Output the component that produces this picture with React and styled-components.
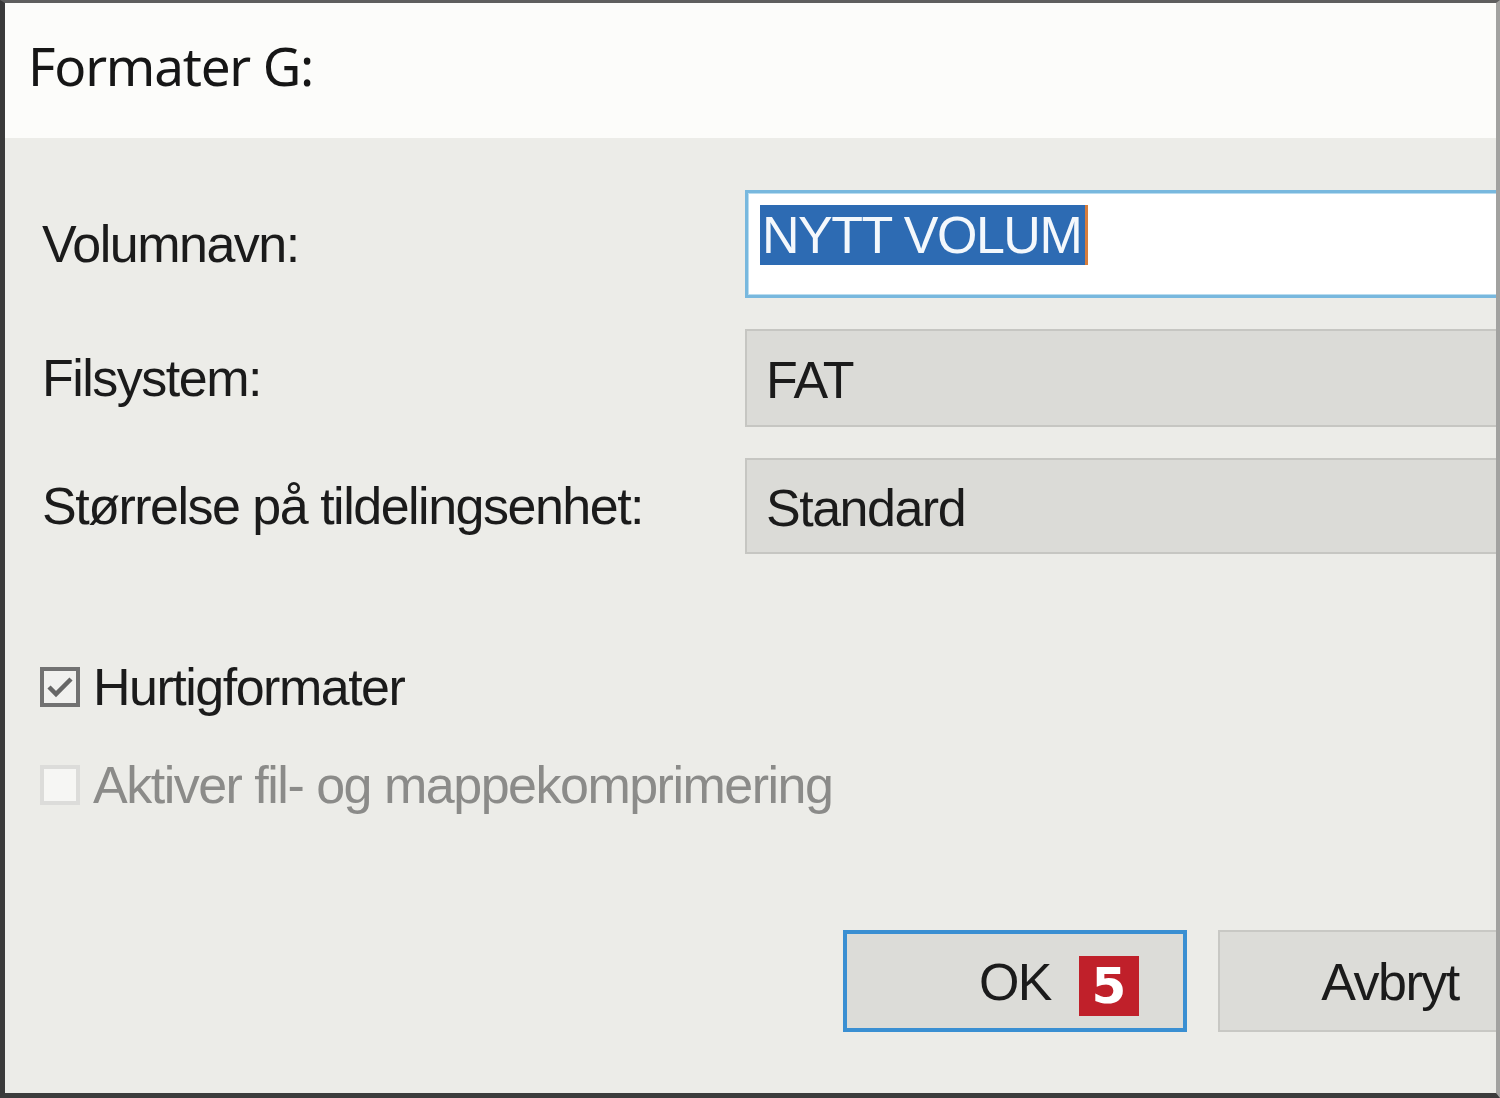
import React from 'react';
import styled, {createGlobalStyle} from 'styled-components';

const GlobalStyle = createGlobalStyle`
  html, body {
    margin: 0;
    padding: 0;
    background: #ecece8;
  }
  * {
    box-sizing: border-box;
  }
`;

const Frame = styled.div`
  width: 1500px;
  height: 1098px;
  overflow: hidden;
  display: flex;
  flex-direction: column;
  background: #ecece8;
  border-left: 5px solid #3a3a3a;
  border-top: 3px solid #5e5e5e;
  border-right: 4px solid #a2a2a0;
  border-bottom: 5px solid #3c3c3c;
  font-family: "Liberation Sans", Arial, sans-serif;
  color: #1b1b1b;
`;

const Header = styled.div`
  height: 135px;
  flex-shrink: 0;
  background: #fcfcfa;
  padding: 34px 0 0 23px;
`;

const Title = styled.h1`
  margin: 0;
  font-family: "Noto Sans", "Open Sans", sans-serif;
  font-weight: 400;
  font-size: 53px;
  line-height: 58px;
  letter-spacing: -1.2px;
  color: #161616;
`;

const Body = styled.div`
  flex: 1;
  display: flex;
  flex-direction: column;
  padding: 52px 0 0 37px;
`;

const Fields = styled.div`
  display: grid;
  grid-template-columns: 703px 760px;
  row-gap: 31px;
  align-items: center;
`;

const Label = styled.label`
  font-size: 52px;
  letter-spacing: -1.5px;
  line-height: 60px;
`;

const TextField = styled.div`
  height: 108px;
  background: #ffffff;
  border: 3px solid #78b8de;
  box-shadow: inset 0 0 0 1px #b9dcef;
  border-right: none;
  padding: 12px 0 0 12px;
`;

const Selected = styled.span`
  display: inline-block;
  background: #2d6bb3;
  color: #f4f8fc;
  font-size: 52px;
  letter-spacing: -1.5px;
  line-height: 60px;
  padding: 0 4px 0 2px;
  border-right: 3px solid #d77d3c;
`;

const Select = styled.div`
  height: ${p => p.h}px;
  background: #dbdbd7;
  border: 2px solid #c6c6c2;
  border-right: none;
  display: flex;
  align-items: center;
  padding: 4px 0 0 19px;
  font-size: 52px;
  letter-spacing: -1.5px;
`;

const Options = styled.div`
  display: flex;
  flex-direction: column;
  gap: 58px;
  margin-top: 113px;
`;

const CheckRow = styled.div`
  display: flex;
  align-items: center;
  gap: 13px;
  font-size: 52px;
  letter-spacing: -1.5px;
  line-height: 40px;
  color: ${p => (p.disabled ? '#8b8b89' : '#1b1b1b')};
`;

const Box = styled.span`
  width: 40px;
  height: 40px;
  flex-shrink: 0;
  margin-left: -2px;
  display: flex;
  align-items: center;
  justify-content: center;
  border: 4px solid ${p => (p.disabled ? '#dcdcda' : '#727272')};
  background: ${p => (p.disabled ? '#f6f6f4' : '#f1f1ef')};
`;

const Footer = styled.div`
  display: flex;
  gap: 31px;
  margin-top: auto;
  margin-bottom: 61px;
  padding-left: 801px;
`;

const Button = styled.div`
  position: relative;
  width: 344px;
  height: 102px;
  flex-shrink: 0;
  display: flex;
  align-items: center;
  justify-content: center;
  padding-top: 2px;
  background: #dcdcd8;
  border: ${p => (p.primary ? '4px solid #3a8fd2' : '2px solid #c8c8c4')};
  font-size: 52px;
  letter-spacing: -1.5px;
`;

const Badge = styled.span`
  position: absolute;
  left: 232px;
  top: 22px;
  width: 60px;
  height: 60px;
  background: #c0202a;
  color: #ffffff;
  font-family: "DejaVu Sans", sans-serif;
  font-weight: 700;
  font-size: 50px;
  line-height: 60px;
  text-align: center;
  letter-spacing: 0;
`;

const Check = () => (
  <svg width="28" height="24" viewBox="0 0 28 24">
    <path d="M3 12 L10 19 L25 4" fill="none" stroke="#666666" strokeWidth="4.5" />
  </svg>
);

export default function App() {
  return (
    <>
      <GlobalStyle />
      <Frame>
        <Header>
          <Title>Formater G:</Title>
        </Header>
        <Body>
          <Fields>
            <Label>Volumnavn:</Label>
            <TextField>
              <Selected>NYTT VOLUM</Selected>
            </TextField>
            <Label>Filsystem:</Label>
            <Select h={98}>FAT</Select>
            <Label>Størrelse på tildelingsenhet:</Label>
            <Select h={96}>Standard</Select>
          </Fields>
          <Options>
            <CheckRow>
              <Box>
                <Check />
              </Box>
              Hurtigformater
            </CheckRow>
            <CheckRow disabled>
              <Box disabled />
              Aktiver fil- og mappekomprimering
            </CheckRow>
          </Options>
          <Footer>
            <Button primary>
              OK
              <Badge>5</Badge>
            </Button>
            <Button>Avbryt</Button>
          </Footer>
        </Body>
      </Frame>
    </>
  );
}
